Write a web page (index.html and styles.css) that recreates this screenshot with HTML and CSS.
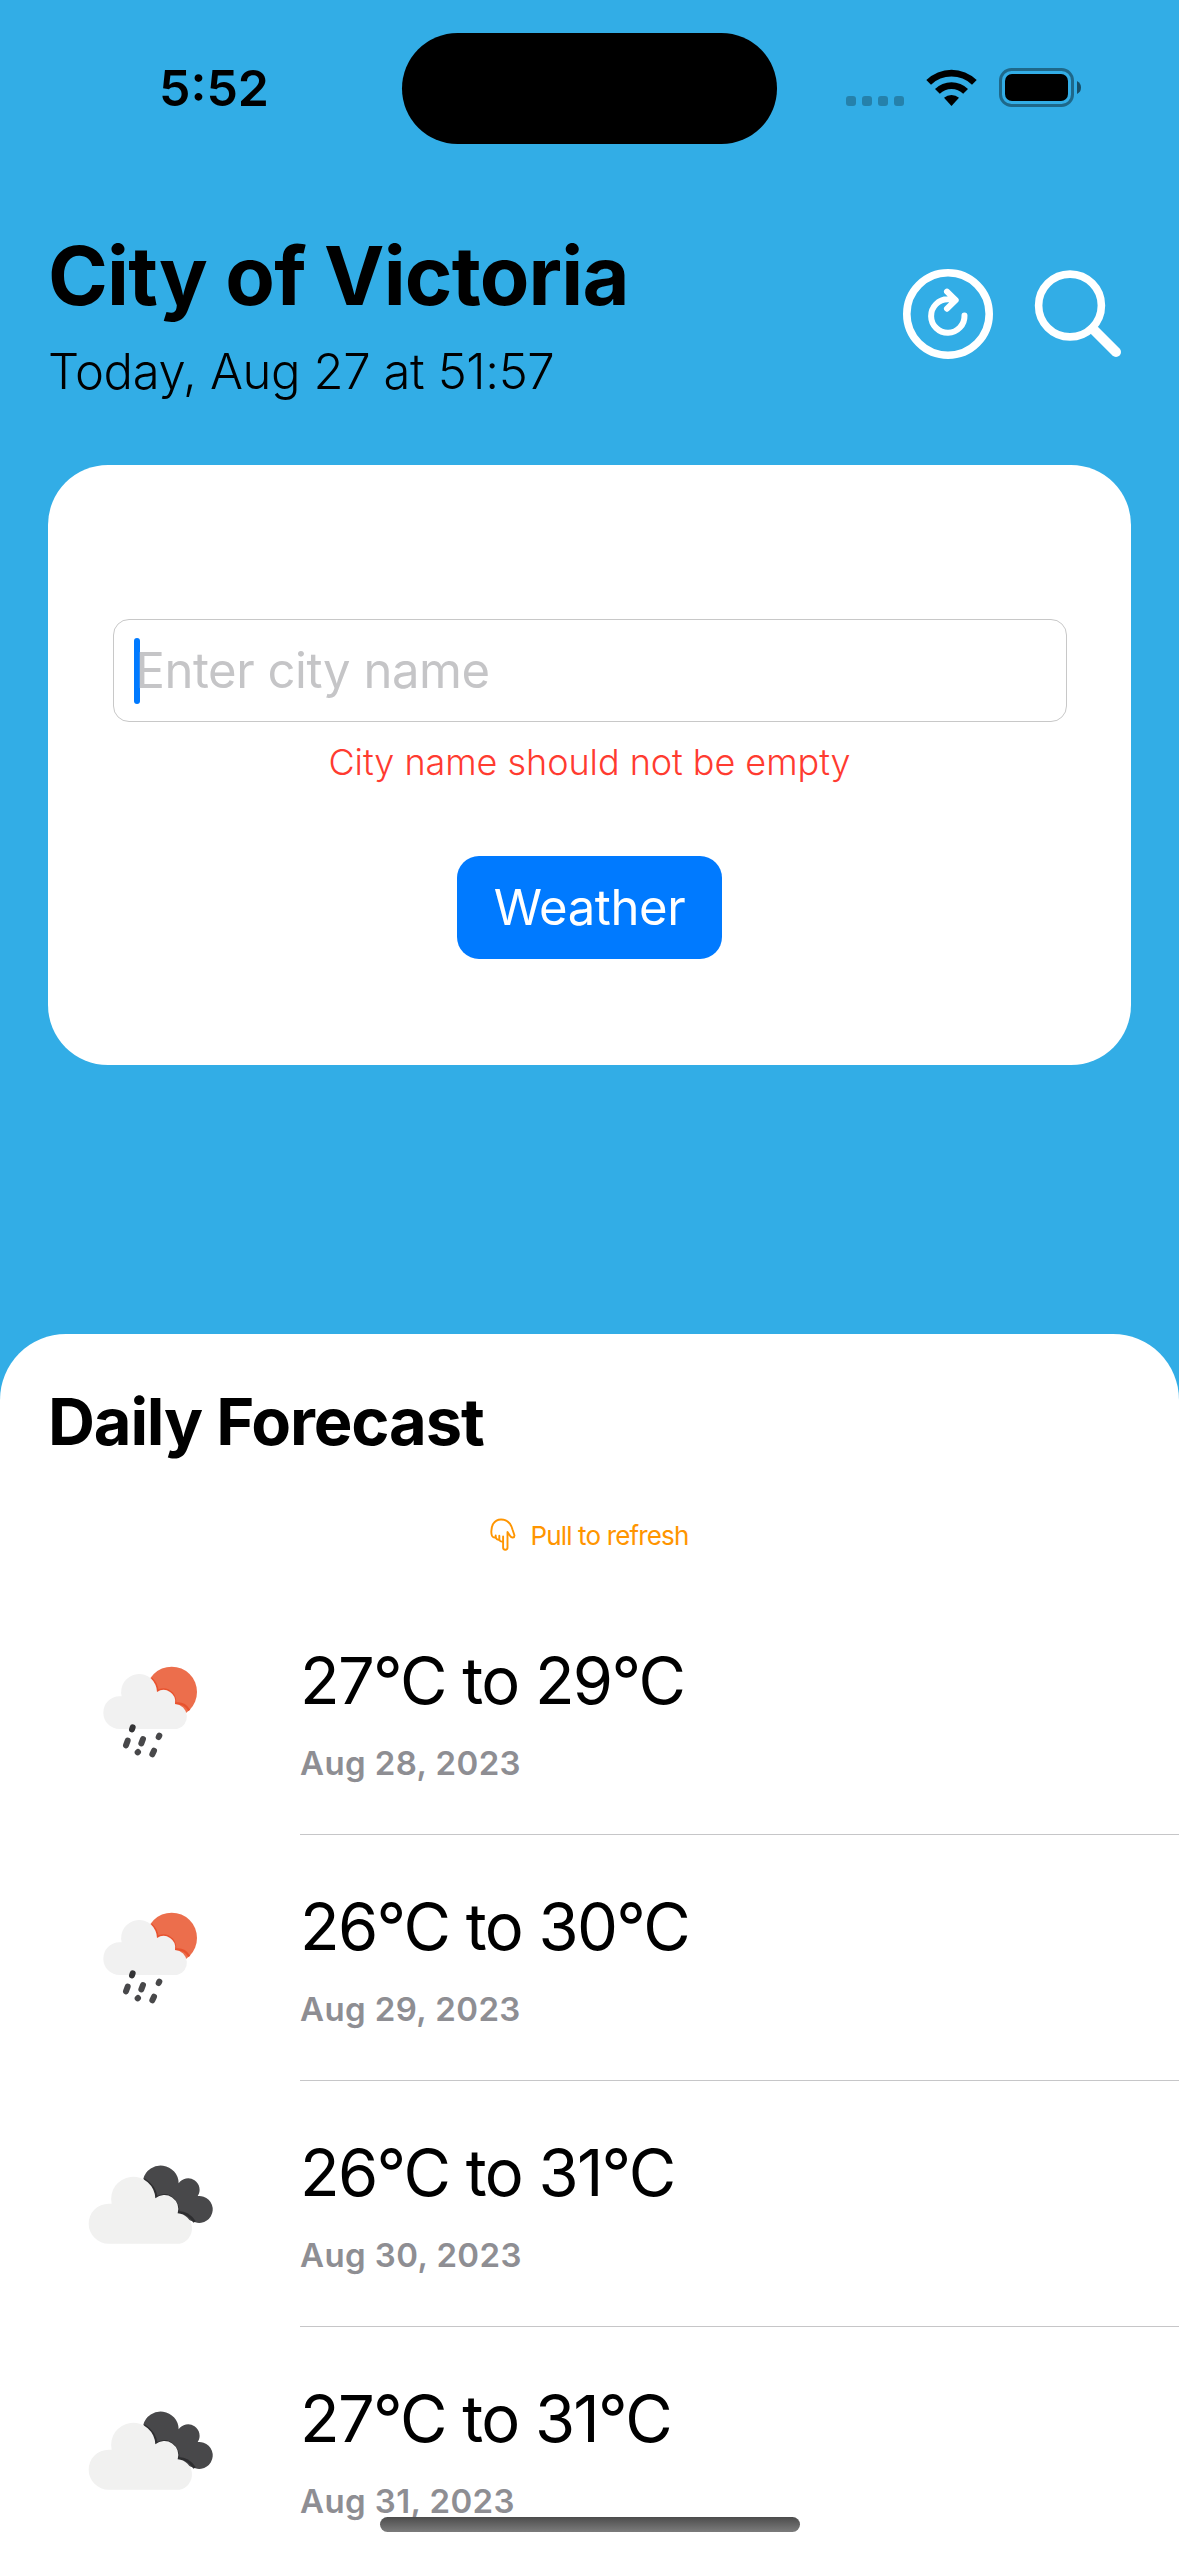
FILE: index.html
```html
<!DOCTYPE html>
<html lang="en">
<head>
<meta charset="utf-8">
<title>Weather</title>
<link rel="stylesheet" href="styles.css">
</head>
<body>
<svg class="sprite" aria-hidden="true">
  <symbol id="rain" viewBox="0 0 540 450">
    <circle cx="335" cy="186" r="76" fill="#ec6e4c"/>
    <path d="M274 146Q292 163 292 184Q315 170 336 190Q347 204 345 221Q372 216 388 241" fill="none" stroke="#e8522e" stroke-width="7"/>
    <path d="M179 297a49 49 0 0 1 0-98h6a53.800 53.800 0 1 1 106-13a35 35 0 0 1 54 36a38 38 0 0 1 6 75z" fill="#f1f1f1"/>
    <g stroke="#48484a" stroke-width="18" stroke-linecap="round">
      <path d="M218 292l-2 6" stroke="#343436"/>
      <path d="M203 332l-5 14M249 327l-5 13M298 317l-2 4M234 366l-1 1M282 362l-5 11"/>
    </g>
  </symbol>
  <symbol id="clouds" viewBox="0 -54 540 450">
    <path d="M250 116a54 54 0 0 1 106 14a34 34 0 0 1 57 38a40.500 40.500 0 1 1-7 79L300 210z" fill="#48484a"/>
    <path d="M252 118Q285 139 289 173Q320 156 341 180Q356 197 354 217Q384 216 404 246" fill="none" stroke="#2e2e30" stroke-width="8"/>
    <path d="M146 311a59 59 0 0 1 0-120h9a66.300 66.300 0 1 1 131-16a42 42 0 0 1 67 45a46 46 0 0 1 6 91z" fill="#f1f1f0"/>
  </symbol>
</svg>
<div class="screen">
  <div class="status">
    <div class="clock">5:52</div>
    <div class="island"></div>
    <svg class="indicators" width="238" height="42" viewBox="0 0 238 42">
      <g opacity=".25"><rect x="0" y="29" width="10" height="10" rx="3"/><rect x="16" y="29" width="10" height="10" rx="3"/><rect x="32" y="29" width="10" height="10" rx="3"/><rect x="48" y="29" width="10" height="10" rx="3"/></g>
      <path d="M80.300 13.000A36 36 0 0 1 130.700 13.000L126 17.700A29.500 29.500 0 0 0 85 17.700Z"/>
      <path d="M89 22A23.500 23.500 0 0 1 122 22L117.200 26.700A17 17 0 0 0 93.800 26.700Z"/>
      <path d="M98 30.800A11.500 11.500 0 0 1 113 30.800L105.500 39Z"/>
      <rect x="154.500" y="2.500" width="72" height="36" rx="11" fill="none" stroke="#000" stroke-opacity=".4" stroke-width="3"/>
      <rect x="159" y="7" width="63" height="27" rx="7"/>
      <path d="M231 14q4 2 4 6.500t-4 6.500z" opacity=".55"/>
    </svg>
  </div>

  <header class="header">
    <div class="place">
      <h1 class="city">City of Victoria</h1>
      <p class="updated">Today, Aug 27 at 51:57</p>
    </div>
    <div class="actions">
      <svg width="92" height="92" viewBox="0 0 92 92" fill="none" stroke="#fff" stroke-linecap="round" stroke-linejoin="round">
        <circle cx="46" cy="46" r="41.200" stroke-width="7.600"/>
        <path d="M62.500 47.500a16.700 16.700 0 1 1-16.700-16.200h6M45 23.700l8.700 8.500-8.700 8.500" stroke-width="6"/>
      </svg>
      <svg width="92" height="92" viewBox="0 0 92 92" fill="none" stroke="#fff">
        <circle cx="38" cy="37.500" r="31.400" stroke-width="7.600"/>
        <path d="M61 61L84 84" stroke-width="10" stroke-linecap="round"/>
      </svg>
    </div>
  </header>

  <main class="card">
    <div class="field"><span class="caret"></span><span class="placeholder">Enter city name</span></div>
    <p class="error">City name should not be empty</p>
    <div class="button" role="button">Weather</div>
  </main>

  <section class="sheet">
    <h2 class="sheet-title">Daily Forecast</h2>
    <div class="pull">
      <svg width="26" height="34" viewBox="0 0 26 34" fill="none" stroke="#ff9500" stroke-width="1.900" stroke-linecap="round" stroke-linejoin="round">
        <path d="M17.500 14V29.500a2.200 2.200 0 0 1-4.400 0V23.500Q10.500 24.200 9.300 21.800Q6.700 22 5.700 19.500Q2 20 1.500 16C.5 8 4 1.500 11 1.500C18.500 1.500 21 6 22.500 11.500L24.500 17.500C24.500 20 21.500 20.300 20.200 18Z"/>
        <path d="M5.700 19.500v-2M9.300 21.800v-4M13.100 23.500v-5"/>
      </svg>
      <span>Pull to refresh</span>
    </div>
    <div class="list">
      <div class="row"><svg class="weather"><use href="#rain"/></svg><div class="info"><div class="temp">27°C to 29°C</div><div class="date">Aug 28, 2023</div></div></div>
      <div class="row"><svg class="weather"><use href="#rain"/></svg><div class="info"><div class="temp">26°C to 30°C</div><div class="date">Aug 29, 2023</div></div></div>
      <div class="row"><svg class="weather"><use href="#clouds"/></svg><div class="info"><div class="temp">26°C to 31°C</div><div class="date">Aug 30, 2023</div></div></div>
      <div class="row"><svg class="weather"><use href="#clouds"/></svg><div class="info"><div class="temp">27°C to 31°C</div><div class="date">Aug 31, 2023</div></div></div>
    </div>
  </section>
  <div class="home-bar"></div>
</div>
</body>
</html>
```
FILE: styles.css
```css
* { box-sizing: border-box; margin: 0; padding: 0; }
body { background: #32ade6; font-family: Inter, "Liberation Sans", sans-serif; color: #000; }
.sprite { display: none; }
.screen { position: relative; display: flex; flex-direction: column; width: 1179px; height: 2556px; overflow: hidden; background: #32ade6; }

.status { display: grid; grid-template-columns: 402px 375px 1fr; height: 177px; flex: none; }
.clock { padding-left: 159px; margin-top: 58px; font-size: 50px; line-height: 60px; font-weight: 600; letter-spacing: 0; }
.island { height: 111px; margin-top: 33px; border-radius: 56px; background: #000; }
.indicators { margin: 67px 0 0 69px; }

.header { display: flex; justify-content: space-between; align-items: center; height: 176px; margin-top: 49px; padding: 0 55px 0 48px; flex: none; }
.place { display: flex; flex-direction: column; gap: 16px; white-space: nowrap; }
.city { font-size: 81px; line-height: 100px; font-weight: 700; letter-spacing: -0.8px; }
.updated { font-size: 49px; line-height: 60px; font-weight: 300; letter-spacing: -0.4px; }
.actions { display: flex; gap: 38px; }

.card { display: flex; flex-direction: column; align-items: center; flex: none; height: 600px; margin: 63px 48px 0; padding-top: 154px; border-radius: 60px; background: #fff; }
.field { display: flex; align-items: center; width: 954px; height: 103px; padding-left: 20px; border: 1px solid #c8c8c8; border-radius: 16px; font-size: 49px; }
.caret { width: 6px; height: 66px; border-radius: 3px; background: #007aff; }
.placeholder { margin-left: -4px; color: #c5c5c7; letter-spacing: -0.45px; }
.error { margin-top: 20px; font-size: 36px; line-height: 40px; font-weight: 300; letter-spacing: -0.05px; color: #ff3b30; }
.button { display: flex; align-items: center; justify-content: center; width: 265px; height: 103px; margin-top: 74px; border-radius: 22px; background: #007aff; color: #fff; font-size: 49px; letter-spacing: -0.4px; }

.sheet { flex: 1; margin-top: 269px; padding-top: 48px; border-radius: 66px 66px 0 0; background: #fff; }
.sheet-title { padding-left: 48px; font-size: 65px; line-height: 80px; font-weight: 700; letter-spacing: -1.15px; }
.pull { display: flex; align-items: center; justify-content: center; gap: 14px; height: 40px; margin-top: 53px; color: #ff9500; font-size: 26px; letter-spacing: -0.85px; }
.list { margin-top: 34px; }
.row { display: flex; height: 246px; }
.weather { width: 180px; height: 150px; margin: 41px 60px 0; flex: none; }
.info { flex: 1; padding-top: 52px; border-bottom: 1px solid #c6c6c8; white-space: nowrap; }
.temp { font-size: 65px; line-height: 80px; letter-spacing: -1.75px; }
.date { margin-top: 22px; font-size: 33px; line-height: 40px; font-weight: 600; letter-spacing: 0.4px; color: #8e8e93; }
.home-bar { position: absolute; left: 380px; top: 2517px; width: 420px; height: 15px; border-radius: 8px; background: linear-gradient(#4c4c4c, #7c7c7c); }
```
